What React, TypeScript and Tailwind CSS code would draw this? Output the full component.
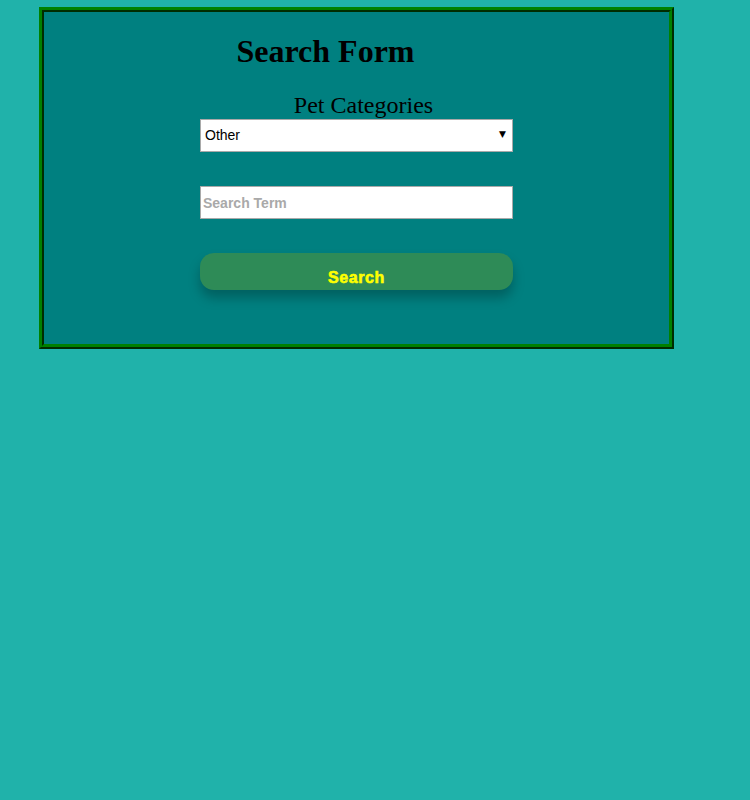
export default function App() {
  return (
    <div className="min-h-[800px] w-full bg-[#20b2aa] pt-[7px] pl-[39px]">
      <div className="w-[635px] h-[342px] border-[5px] border-[#008000] [border-style:ridge] bg-[#008080]">
        <h1 className="mt-[21px] pr-[62px] text-center font-['Liberation_Serif',serif] text-[32px] font-bold leading-[37px] text-black">
          Search Form
        </h1>
        <form className="mt-[22px] flex flex-col items-center" onSubmit={(e) => e.preventDefault()}>
          <label
            htmlFor="category"
            className="pl-[14px] font-['Liberation_Serif',serif] text-[24px] leading-[27px] text-black"
          >
            Pet Categories
          </label>
          <div className="relative w-[313px]">
            <select
              id="category"
              defaultValue="other"
              className="h-[33px] w-full appearance-none border border-[#a9a9a9] bg-white pl-[4px] font-['Liberation_Sans',sans-serif] text-[14px] text-black outline-none"
            >
              <option value="dog">Dog</option>
              <option value="cat">Cat</option>
              <option value="bird">Bird</option>
              <option value="other">Other</option>
            </select>
            <span className="pointer-events-none absolute right-[7px] top-[9px] font-['DejaVu_Sans',sans-serif] text-[9px] text-black">
              ▼
            </span>
          </div>
          <input
            type="text"
            placeholder="Search Term"
            className="mt-[34px] h-[33px] w-[313px] border border-[#a9a9a9] bg-white pl-[2px] font-['Liberation_Sans',sans-serif] text-[14px] font-bold text-black outline-none placeholder:text-[#a9a9a9]"
          />
          <button
            type="submit"
            className="mt-[34px] h-[37px] w-[313px] rounded-[14px] bg-[#2e8b57] pt-[12px] font-['Liberation_Sans',sans-serif] text-[16px] font-bold leading-[24px] tracking-[0.6px] text-[#ffff00] [-webkit-text-stroke:0.6px_#ffff00] shadow-[0_8px_12px_rgba(0,0,0,0.25)]"
          >
            Search
          </button>
        </form>
      </div>
    </div>
  );
}
